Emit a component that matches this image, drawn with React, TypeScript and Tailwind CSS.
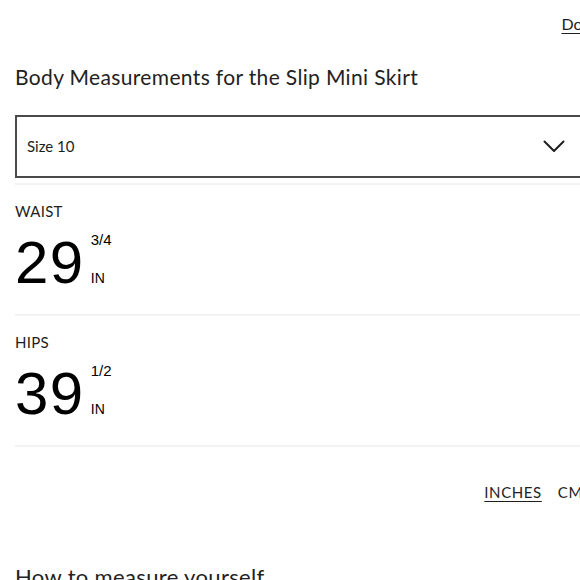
const sans = "font-['Lato','Noto_Sans',sans-serif]";
const helv = "font-['Liberation_Sans',Arial,sans-serif]";

type Measure = {
    label: string;
    whole: string;
    fraction: string;
};

const measures: Measure[] = [
    { label: "WAIST", whole: "29", fraction: "3/4" },
    { label: "HIPS", whole: "39", fraction: "1/2" },
];

const MeasureBlock = ({ label, whole, fraction }: Measure) => {
    return (
        <div className="pt-[19px] pb-[21px] border-b-2 border-[#f3f3f3]">
            <div className={`${sans} text-[15px] leading-none tracking-[0.3px] text-[#1e1e1e]`}>
                {label}
            </div>
            <div className="mt-[14px] flex items-start">
                <span className={`${helv} text-[60px] leading-none tracking-[1.5px] text-black`}>
                    {whole}
                </span>
                <div className={`${helv} ml-[6px] flex flex-col text-black`}>
                    <span className="-mt-[1px] text-[15px] leading-none">
                        {fraction}
                    </span>
                    <span className="mt-[24px] text-[14px] leading-none">IN</span>
                </div>
            </div>
        </div>
    );
};

export default function App() {
    return (
        <div className="w-[580px] h-[580px] overflow-hidden bg-white">
            <div className={`w-[590px] pl-[15px] ${sans} text-[#1e1e1e]`}>
                {/* top bar */}
                <div className="flex justify-end pt-[16px] -mr-[10px]">
                    <a href="#" className="text-[16px] leading-none underline underline-offset-[3px]">
                        Done
                    </a>
                </div>

                <h2 className="mt-[34px] text-[21px] leading-none tracking-[0.35px] text-[#222]">
                    Body Measurements for the Slip Mini Skirt
                </h2>

                {/* size select */}
                <div className="mt-[28px] h-[63px] border-2 border-[#4a4a4a] flex items-center justify-between pl-[10px] pr-[23px]">
                    <span className="text-[15px] leading-none">Size 10</span>
                    <svg width="22" height="13" viewBox="0 0 22 13" fill="none">
                        <polyline
                            points="1.5,1.5 11,11 20.5,1.5"
                            stroke="#1e1e1e"
                            strokeWidth="2"
                            strokeLinecap="round"
                            strokeLinejoin="round"
                        />
                    </svg>
                </div>

                <div className="mt-[5px] border-b-2 border-[#f3f3f3]" />

                {measures.map((m) => (
                    <MeasureBlock key={m.label} {...m} />
                ))}

                {/* unit toggle */}
                <div className="mt-[38px] flex justify-end gap-[16px] pr-[7px] text-[15px] leading-none tracking-[0.6px]">
                    <span className="underline underline-offset-[3px]">INCHES</span>
                    <span>CM</span>
                </div>

                <h2 className="mt-[66px] text-[22px] leading-none tracking-[0.35px] text-[#222]">
                    How to measure yourself
                </h2>
            </div>
        </div>
    );
}
